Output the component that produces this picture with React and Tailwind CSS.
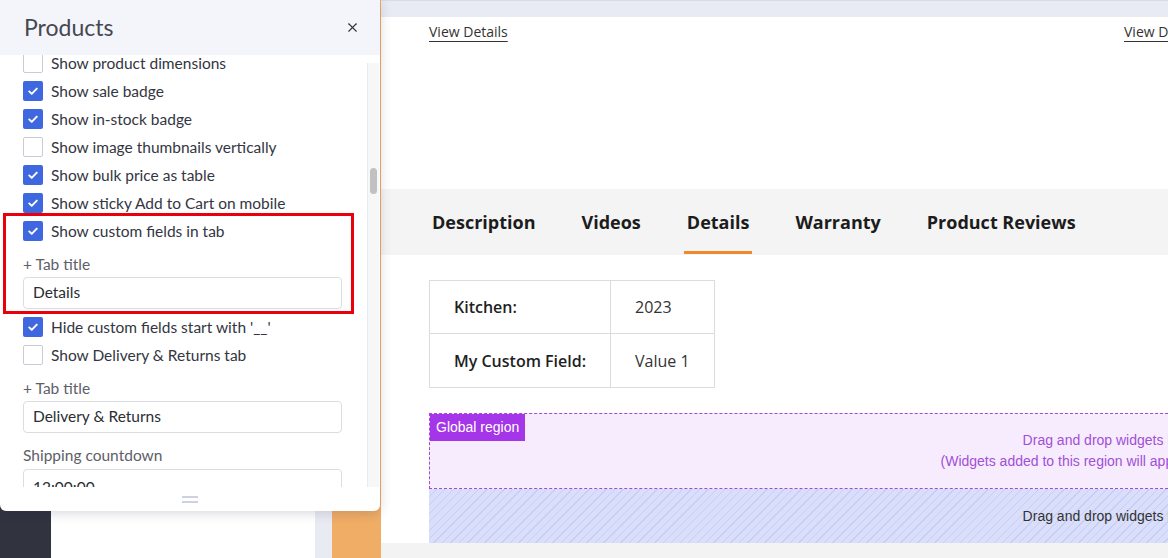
import { X } from "lucide-react";

const panelFont = { fontFamily: "Lato, 'Open Sans', sans-serif" };

function Checkbox({ checked }) {
  if (!checked) {
    return <span className="w-[20px] h-[20px] shrink-0 rounded-[2px] border border-[#c9ccd6] bg-white" />;
  }
  return (
    <span className="w-[20px] h-[20px] shrink-0 rounded-[2px] bg-[#3f68e0] flex items-center justify-center">
      <svg width="14" height="14" viewBox="0 0 14 14" fill="none">
        <path d="M3.2 7.4l2.5 2.4L10.8 4.6" stroke="white" strokeWidth="1.9" strokeLinecap="round" strokeLinejoin="round" />
      </svg>
    </span>
  );
}

function CheckRow({ checked, label, className = "" }) {
  return (
    <div className={"flex items-center gap-[8px] h-[20px] " + className}>
      <Checkbox checked={checked} />
      <span className="text-[15.5px] text-[#33363f] leading-[20px] whitespace-nowrap">{label}</span>
    </div>
  );
}

function TextInput({ value, className = "" }) {
  return (
    <div className={"h-[32px] w-[319px] rounded-[4px] border border-[#dcdde3] flex items-center px-[9px] text-[15.5px] text-[#2b2d33] " + className}>
      {value}
    </div>
  );
}

function SettingsPanel() {
  return (
    <div style={panelFont} className="absolute left-0 top-0 w-[380px] h-[511px] bg-white rounded-b-[6px] shadow-[0_2px_12px_rgba(30,35,60,0.18)] flex flex-col z-10">
      <div className="h-[55px] shrink-0 bg-[#f4f5fb] flex items-center justify-between pl-[24px] pr-[20px]">
        <span className="text-[23px] text-[#46484f]">Products</span>
        <X size={15} strokeWidth={1.8} className="text-[#333]" />
      </div>

      <div className="relative h-[432px] overflow-hidden">
        <div className="pl-[23px] -mt-[2px] flex flex-col">
          <CheckRow checked={false} label="Show product dimensions" />
          <CheckRow checked label="Show sale badge" className="mt-[8px]" />
          <CheckRow checked label="Show in-stock badge" className="mt-[8px]" />
          <CheckRow checked={false} label="Show image thumbnails vertically" className="mt-[8px]" />
          <CheckRow checked label="Show bulk price as table" className="mt-[8px]" />
          <CheckRow checked label="Show sticky Add to Cart on mobile" className="mt-[8px]" />

          <div className="relative mt-[8px]">
            <div className="absolute -left-[20px] -top-[8px] w-[351px] -bottom-[5px] border-[3px] border-[#e8000b]" />
            <CheckRow checked label="Show custom fields in tab" />
            <div className="mt-[13px] text-[15.5px] leading-[20px] text-[#5d6068]">+ Tab title</div>
            <TextInput value="Details" className="mt-[3px]" />
          </div>

          <CheckRow checked label="Hide custom fields start with '__'" className="mt-[8px]" />
          <CheckRow checked={false} label="Show Delivery & Returns tab" className="mt-[8px]" />
          <div className="mt-[13px] text-[15.5px] leading-[20px] text-[#5d6068]">+ Tab title</div>
          <TextInput value="Delivery & Returns" className="mt-[3px]" />
          <div className="mt-[12px] text-[15.5px] leading-[20px] text-[#5d6068]">Shipping countdown</div>
          <TextInput value="12:00:00" className="mt-[4px] items-start pt-[6px]" />
        </div>

        <div className="absolute right-[1px] top-[8px] bottom-0 w-[12px] bg-[#f7f7f8] border-l border-[#ebebee]">
          <div className="absolute left-[2px] top-[105px] w-[7px] h-[26px] rounded-full bg-[#c1c1c4]" />
        </div>
      </div>

      <div className="flex-1 flex flex-col items-center justify-center gap-[3px]">
        <span className="w-[16px] h-[2px] bg-[#cdd1e2]" />
        <span className="w-[16px] h-[2px] bg-[#cdd1e2]" />
      </div>
    </div>
  );
}

const tabs = ["Description", "Videos", "Details", "Warranty", "Product Reviews"];

function Canvas() {
  return (
    <div className="flex-1 overflow-hidden flex flex-col" style={{ fontFamily: "'Open Sans', sans-serif" }}>
      <div className="h-[17px] shrink-0 bg-[#e9ebf3] border-t border-[#d9dce6]" />

      <div className="h-[172px] shrink-0 bg-white flex pl-[48px] pt-[2px]">
        <div className="w-[695px] shrink-0">
          <span className="text-[14px] text-[#333] underline underline-offset-[4px]">View Details</span>
        </div>
        <div className="w-[695px] shrink-0">
          <span className="text-[14px] text-[#333] underline underline-offset-[4px]">View Details</span>
        </div>
      </div>

      <div className="h-[66px] shrink-0 bg-[#f4f4f4] flex gap-[40px] pl-[48px]">
        {tabs.map((t) => (
          <div key={t} className="relative h-full flex items-center px-[3px]">
            <span className="text-[18px] font-bold text-[#1c1c1c] whitespace-nowrap">{t}</span>
            {t === "Details" && <span className="absolute left-0 right-0 bottom-[1px] h-[3px] bg-[#f0892c]" />}
          </div>
        ))}
      </div>

      <div className="bg-white pl-[48px] pt-[25px] shrink-0">
        <div className="w-[286px] border border-[#dcdcdc] grid grid-cols-[181px_1fr] text-[16px]">
          <div className="h-[53px] flex items-center pl-[24px] font-semibold text-[#1f1f1f] border-r border-b border-[#dcdcdc]">Kitchen:</div>
          <div className="h-[53px] flex items-center pl-[24px] text-[#333] border-b border-[#dcdcdc]">2023</div>
          <div className="h-[53px] flex items-center pl-[24px] font-semibold text-[#1f1f1f] border-r border-[#dcdcdc]">My Custom Field:</div>
          <div className="h-[53px] flex items-center pl-[24px] text-[#333]">Value 1</div>
        </div>

        <div className="mt-[25px] w-[1360px]" style={{ fontFamily: "'Liberation Sans', Arial, sans-serif" }}>
          <div className="relative h-[76px] border border-dashed border-[#a548d2] bg-[#f6ecfd] pt-[16px] text-center text-[14px] leading-[21px] text-[#a24fd8]">
            <span className="absolute left-0 top-0 h-[27px] px-[6px] flex items-center bg-[#a435e8] text-white text-[14px]">Global region</span>
            <div>Drag and drop widgets here</div>
            <div>(Widgets added to this region will appear on all pages)</div>
          </div>
          <div className="h-[54px] flex items-center justify-center text-[14px] text-[#333] bg-[repeating-linear-gradient(135deg,#d9defa_0px,#d9defa_5px,#c8cef3_5px,#c8cef3_6px)]">
            Drag and drop widgets here
          </div>
        </div>
      </div>

      <div className="flex-1 bg-[#f3f3f3]" />
    </div>
  );
}

export default function App() {
  return (
    <div className="relative w-[1168px] h-[558px] overflow-hidden flex bg-white">
      <div className="w-[51px] shrink-0 bg-[#31333f]" />
      <div className="w-[264px] shrink-0 bg-white" />
      <div className="w-[17px] shrink-0 bg-[#e9ebf3]" />
      <div className="w-[49px] shrink-0 bg-[#f0ad66]" />
      <Canvas />
      <SettingsPanel />
    </div>
  );
}
